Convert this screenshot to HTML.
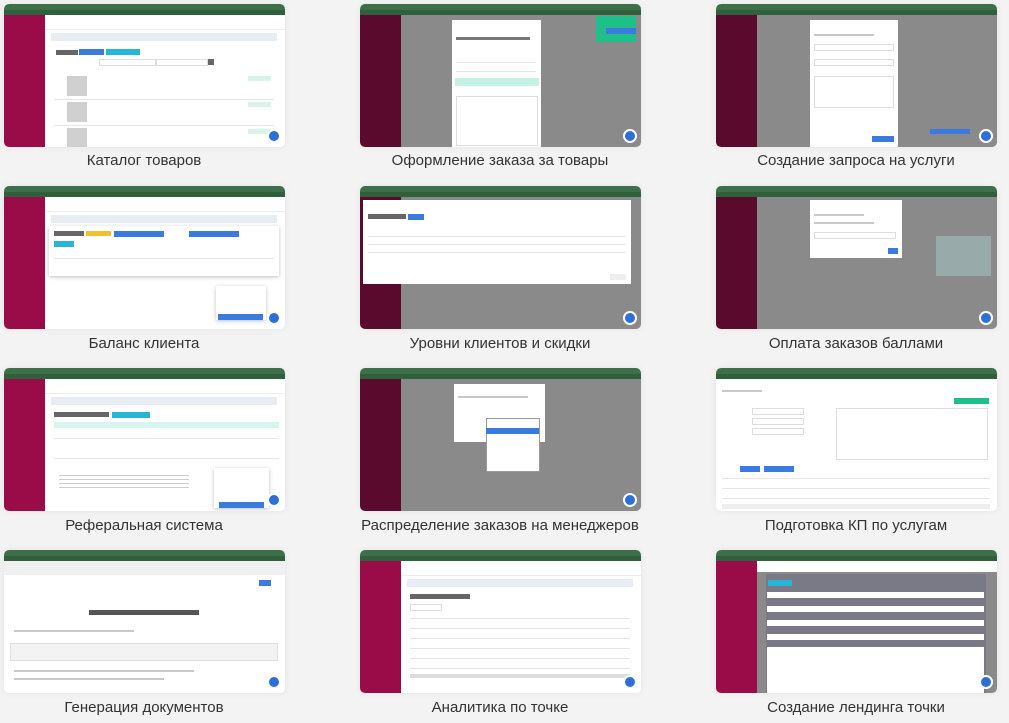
<!DOCTYPE html>
<html><head><meta charset="utf-8"><style>
body{margin:0;width:1009px;height:723px;background:#f3f3f3;font-family:"Liberation Sans",sans-serif;position:relative;overflow:hidden}
.t{position:absolute;width:281px;height:143px;border-radius:5px;overflow:hidden;background:#fff;box-shadow:0 0 8px rgba(0,0,0,.06)}
.t>div{position:absolute}
.bar{left:0;top:0;width:100%;height:6px;background:#3d6f4a}
.bar2{left:0;top:6px;width:100%;height:5px;background:#2f5f3b}
.sb{left:0;top:11px;width:41px;height:132px;background:#9a0c48}
.top{left:41px;top:11px;right:0;height:14px;background:#fff;border-bottom:1px solid #eee}
.bc{left:47px;top:29px;right:8px;height:8px;background:#e8ecf3}
.md{background:#fff}
.row{height:1px;background:#e6e6e6}
.img{width:20px;height:20px;background:#d0d0d0}
.btn{height:6px;background:#3b7be0}
.gr{height:5px;background:#d6f5e6}
.cap{position:absolute;width:300px;text-align:center;font-size:15px;color:#333}
.bub{width:10px;height:10px;border-radius:50%;background:#2d6fd8;border:2px solid #fff;right:4px;bottom:4px}
.ln{height:2px;background:#c8c8c8}
</style></head><body>

<!-- Row 1 -->
<div class="t" style="left:4px;top:4px">
<div class="bar"></div><div class="bar2"></div><div class="sb"></div><div class="top"></div><div class="bc"></div>
<div style="left:52px;top:46px;width:22px;height:5px;background:#666"></div>
<div class="btn" style="left:75px;top:45px;width:25px"></div><div class="btn" style="left:102px;top:45px;width:34px;background:#29b6d6"></div>
<div style="left:95px;top:55px;width:55px;height:5px;border:1px solid #ddd"></div><div style="left:152px;top:55px;width:50px;height:5px;border:1px solid #ddd"></div>
<div style="left:204px;top:55px;width:6px;height:6px;background:#666"></div>
<div class="img" style="left:63px;top:72px"></div><div class="img" style="left:63px;top:98px"></div><div class="img" style="left:63px;top:124px"></div>
<div class="row" style="left:50px;top:95px;width:220px"></div><div class="row" style="left:50px;top:121px;width:220px"></div>
<div class="gr" style="left:244px;top:72px;width:23px"></div><div class="gr" style="left:244px;top:98px;width:23px"></div><div class="gr" style="left:244px;top:125px;width:23px"></div>
<div class="bub"></div></div>
<div class="cap" style="left:-6px;top:152px">Каталог товаров</div>

<div class="t" style="left:360px;top:4px">
<div class="bar"></div><div class="bar2"></div><div class="sb" style="background:#5a0a2c"></div><div style="left:41px;top:11px;right:0;bottom:0;background:#8a8a8a"></div>
<div class="md" style="left:92px;top:16px;width:89px;height:127px"></div>
<div style="left:96px;top:33px;width:74px;height:3px;background:#777"></div>
<div class="row" style="left:96px;top:58px;width:80px"></div><div class="row" style="left:96px;top:67px;width:80px"></div>
<div style="left:95px;top:74px;width:84px;height:8px;background:#c6f2e2"></div>
<div style="left:96px;top:92px;width:80px;height:48px;border:1px solid #ddd"></div>
<div style="left:236px;top:12px;width:40px;height:26px;background:#1fbf8a"></div>
<div class="btn" style="left:246px;top:24px;width:30px"></div>
<div class="bub"></div></div>
<div class="cap" style="left:350px;top:152px">Оформление заказа за товары</div>

<div class="t" style="left:716px;top:4px">
<div class="bar"></div><div class="bar2"></div><div class="sb" style="background:#5a0a2c"></div><div style="left:41px;top:11px;right:0;bottom:0;background:#8a8a8a"></div>
<div class="md" style="left:94px;top:16px;width:88px;height:127px"></div>
<div class="ln" style="left:98px;top:30px;width:60px"></div>
<div style="left:98px;top:40px;width:78px;height:5px;border:1px solid #ddd"></div>
<div style="left:98px;top:55px;width:78px;height:5px;border:1px solid #ddd"></div>
<div style="left:98px;top:72px;width:78px;height:30px;border:1px solid #ddd"></div>
<div class="btn" style="left:156px;top:132px;width:22px"></div>
<div style="left:214px;top:125px;width:40px;height:5px;background:#3b7be0"></div>
<div class="bub"></div></div>
<div class="cap" style="left:706px;top:152px">Создание запроса на услуги</div>

<!-- Row 2 -->
<div class="t" style="left:4px;top:186px">
<div class="bar"></div><div class="bar2"></div><div class="sb"></div><div class="top"></div><div class="bc"></div>
<div style="left:45px;top:40px;width:230px;height:50px;background:#fff;box-shadow:0 1px 4px rgba(0,0,0,.25)"></div>
<div style="left:50px;top:45px;width:30px;height:5px;background:#666"></div>
<div style="left:82px;top:45px;width:25px;height:5px;background:#f0c030"></div>
<div class="btn" style="left:110px;top:45px;width:50px"></div><div class="btn" style="left:185px;top:45px;width:50px"></div>
<div class="btn" style="left:50px;top:55px;width:20px;background:#29b6d6"></div>
<div class="row" style="left:50px;top:72px;width:220px"></div>
<div style="left:212px;top:100px;width:50px;height:34px;background:#fff;box-shadow:0 1px 4px rgba(0,0,0,.25)"></div>
<div class="btn" style="left:214px;top:128px;width:45px"></div>
<div class="bub"></div></div>
<div class="cap" style="left:-6px;top:335px">Баланс клиента</div>

<div class="t" style="left:360px;top:186px">
<div class="bar"></div><div class="bar2"></div><div class="sb" style="background:#5a0a2c"></div><div style="left:41px;top:11px;right:0;bottom:0;background:#8a8a8a"></div>
<div class="md" style="left:3px;top:14px;width:268px;height:84px"></div>
<div style="left:8px;top:28px;width:38px;height:5px;background:#666"></div><div class="btn" style="left:48px;top:28px;width:16px"></div>
<div class="row" style="left:8px;top:50px;width:258px"></div><div class="row" style="left:8px;top:58px;width:258px"></div><div class="row" style="left:8px;top:66px;width:258px"></div>
<div class="btn" style="left:250px;top:88px;width:16px;background:#eee"></div>
<div class="bub"></div></div>
<div class="cap" style="left:350px;top:335px">Уровни клиентов и скидки</div>

<div class="t" style="left:716px;top:186px">
<div class="bar"></div><div class="bar2"></div><div class="sb" style="background:#5a0a2c"></div><div style="left:41px;top:11px;right:0;bottom:0;background:#8a8a8a"></div>
<div class="md" style="left:94px;top:14px;width:92px;height:58px"></div>
<div class="ln" style="left:98px;top:28px;width:50px"></div><div class="ln" style="left:98px;top:36px;width:60px"></div>
<div style="left:98px;top:46px;width:80px;height:5px;border:1px solid #ddd"></div>
<div class="btn" style="left:172px;top:62px;width:10px"></div>
<div style="left:220px;top:50px;width:55px;height:40px;background:#9aa"></div>
<div class="bub"></div></div>
<div class="cap" style="left:706px;top:335px">Оплата заказов баллами</div>

<!-- Row 3 -->
<div class="t" style="left:4px;top:368px">
<div class="bar"></div><div class="bar2"></div><div class="sb"></div><div class="top"></div><div class="bc"></div>
<div style="left:50px;top:44px;width:55px;height:5px;background:#666"></div><div class="btn" style="left:108px;top:44px;width:38px;background:#29b6d6"></div>
<div style="left:50px;top:54px;width:225px;height:6px;background:#d6f5ee"></div>
<div class="row" style="left:50px;top:70px;width:225px"></div><div class="row" style="left:50px;top:90px;width:225px"></div>
<div style="left:55px;top:104px;width:130px;height:16px;background:repeating-linear-gradient(#fff 0 3px,#ccc 3px 4px)"></div>
<div style="left:210px;top:100px;width:55px;height:40px;background:#fff;box-shadow:0 1px 4px rgba(0,0,0,.25)"></div>
<div class="btn" style="left:215px;top:134px;width:45px"></div>
<div class="bub"></div></div>
<div class="cap" style="left:-6px;top:517px">Реферальная система</div>

<div class="t" style="left:360px;top:368px">
<div class="bar"></div><div class="bar2"></div><div class="sb" style="background:#5a0a2c"></div><div style="left:41px;top:11px;right:0;bottom:0;background:#8a8a8a"></div>
<div class="md" style="left:94px;top:16px;width:91px;height:58px"></div>
<div class="ln" style="left:98px;top:28px;width:70px"></div>
<div style="left:126px;top:50px;width:52px;height:52px;background:#fff;border:1px solid #999"></div>
<div class="btn" style="left:126px;top:60px;width:53px"></div>
<div class="bub"></div></div>
<div class="cap" style="left:350px;top:517px">Распределение заказов на менеджеров</div>

<div class="t" style="left:716px;top:368px">
<div class="bar"></div><div class="bar2"></div>
<div class="ln" style="left:6px;top:22px;width:40px"></div>
<div class="btn" style="left:238px;top:30px;width:35px;background:#1fbf8a"></div>
<div style="left:36px;top:40px;width:50px;height:5px;border:1px solid #ddd"></div><div style="left:36px;top:50px;width:50px;height:5px;border:1px solid #ddd"></div><div style="left:36px;top:60px;width:50px;height:5px;border:1px solid #ddd"></div>
<div style="left:120px;top:40px;width:150px;height:50px;border:1px solid #ddd"></div>
<div class="btn" style="left:24px;top:98px;width:20px"></div><div class="btn" style="left:48px;top:98px;width:30px"></div>
<div class="row" style="left:6px;top:110px;width:268px"></div><div class="row" style="left:6px;top:120px;width:268px"></div><div class="row" style="left:6px;top:130px;width:268px"></div>
<div style="left:6px;top:136px;width:268px;height:5px;background:#eee"></div>
</div>
<div class="cap" style="left:706px;top:517px">Подготовка КП по услугам</div>

<!-- Row 4 -->
<div class="t" style="left:4px;top:550px">
<div class="bar"></div><div class="bar2"></div>
<div style="left:0;top:11px;width:100%;height:14px;background:#f0f0f0"></div>
<div class="btn" style="left:255px;top:30px;width:12px"></div>
<div style="left:85px;top:60px;width:110px;height:5px;background:#555"></div>
<div class="ln" style="left:10px;top:80px;width:120px"></div>
<div style="left:6px;top:93px;width:266px;height:16px;background:#f3f3f3;border:1px solid #e0e0e0"></div>
<div class="ln" style="left:10px;top:120px;width:180px"></div><div class="ln" style="left:10px;top:128px;width:150px"></div>
<div class="bub"></div></div>
<div class="cap" style="left:-6px;top:699px">Генерация документов</div>

<div class="t" style="left:360px;top:550px">
<div class="bar"></div><div class="bar2"></div><div class="sb"></div><div class="top"></div><div class="bc"></div>
<div style="left:50px;top:44px;width:60px;height:5px;background:#666"></div>
<div style="left:50px;top:54px;width:30px;height:5px;border:1px solid #ddd"></div>
<div class="row" style="left:50px;top:68px;width:220px"></div><div class="row" style="left:50px;top:78px;width:220px"></div><div class="row" style="left:50px;top:88px;width:220px"></div><div class="row" style="left:50px;top:98px;width:220px"></div><div class="row" style="left:50px;top:108px;width:220px"></div><div class="row" style="left:50px;top:118px;width:220px"></div>
<div style="left:50px;top:124px;width:220px;height:4px;background:#ddd"></div>
<div class="bub"></div></div>
<div class="cap" style="left:350px;top:699px">Аналитика по точке</div>

<div class="t" style="left:716px;top:550px">
<div class="bar"></div><div class="bar2"></div><div class="sb"></div>
<div style="left:41px;top:11px;right:0;height:10px;background:#fff"></div>
<div style="left:41px;top:22px;right:0;bottom:0;background:#8a8a8a"></div>
<div style="left:50px;top:24px;width:220px;height:119px;background:#7a7a86"></div>
<div class="btn" style="left:52px;top:30px;width:24px;background:#29b6d6"></div>
<div style="left:51px;top:42px;width:217px;height:6px;background:#fff"></div>
<div style="left:51px;top:56px;width:217px;height:6px;background:#fff"></div>
<div style="left:51px;top:70px;width:217px;height:6px;background:#fff"></div>
<div style="left:51px;top:84px;width:217px;height:6px;background:#fff"></div>
<div style="left:51px;top:97px;width:217px;height:46px;background:#fff"></div>
<div class="bub"></div></div>
<div class="cap" style="left:706px;top:699px">Создание лендинга точки</div>

</body></html>
